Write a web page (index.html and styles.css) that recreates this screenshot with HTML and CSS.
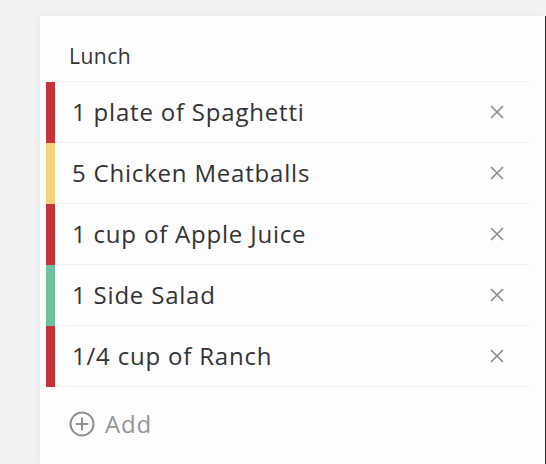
FILE: index.html
```html
<!DOCTYPE html>
<html>
<head>
	<title>Lunch</title>
	<link rel="stylesheet" href="styles.css">
</head>
<body>
  <div class="page">
    <div class="meal-card">
      <div class="meal-title">Lunch</div>

      <ul class="food-list">
        <li class="food red"><div class="food-body"><span class="food-name">1 plate of Spaghetti</span><button class="remove"><svg width="14" height="14" viewBox="0 0 14 14"><path d="M1 1l12 12M13 1L1 13"/></svg></button></div></li>
        <li class="food yellow"><div class="food-body"><span class="food-name">5 Chicken Meatballs</span><button class="remove"><svg width="14" height="14" viewBox="0 0 14 14"><path d="M1 1l12 12M13 1L1 13"/></svg></button></div></li>
        <li class="food red"><div class="food-body"><span class="food-name">1 cup of Apple Juice</span><button class="remove"><svg width="14" height="14" viewBox="0 0 14 14"><path d="M1 1l12 12M13 1L1 13"/></svg></button></div></li>
        <li class="food green"><div class="food-body"><span class="food-name">1 Side Salad</span><button class="remove"><svg width="14" height="14" viewBox="0 0 14 14"><path d="M1 1l12 12M13 1L1 13"/></svg></button></div></li>
        <li class="food red"><div class="food-body"><span class="food-name">1/4 cup of Ranch</span><button class="remove"><svg width="14" height="14" viewBox="0 0 14 14"><path d="M1 1l12 12M13 1L1 13"/></svg></button></div></li>
      </ul>

      <div class="add-row">
        <svg class="add-icon" width="26" height="26" viewBox="0 0 26 26">
          <circle cx="13" cy="13" r="11.5" fill="none" stroke="#8e8e8e" stroke-width="2"/>
          <path d="M13 7.5v11M7.5 13h11" stroke="#8e8e8e" stroke-width="2" stroke-linecap="round"/>
        </svg>
        <span>Add</span>
      </div>
    </div>
  </div>
</body>
</html>
```

FILE: styles.css
```css
html, body{
	margin:0;
	padding:0;
}

body{
	background:#f2f2f4;
	font-family:"Open Sans", "Noto Sans", sans-serif;
	color:#333335;
}

.page{
	padding:16px 0 0 40px;
	height:448px;
}

	.meal-card{
		background:#fdfdfe;
		height:100%;
		border-right:1px solid #2c2c2e;
		box-shadow:-2px 0 6px rgba(0,0,0,.04);
	}

		.meal-title{
			padding:28px 0 14px 29px;
			font-size:21px;
			line-height:24px;
			letter-spacing:.5px;
		}

		.food-list{
			list-style:none;
			margin:0;
			padding:0 16px 0 6px;
		}

			.food{
				height:61px;
				border-left:9px solid #c7313c;
			}

			.food.yellow{ border-left-color:#f3d27c; }
			.food.green{ border-left-color:#6dc19c; }

				.food-body{
					display:flex;
					align-items:center;
					height:60px;
					border-bottom:1px solid #efeff1;
				}

				.food:first-child .food-body{
					box-shadow:0 -1px 0 #f1f1f3;
				}

					.food-name{
						flex:1;
						padding:0 0 2px 17px;
						font-size:24px;
						letter-spacing:.8px;
					}

					.remove{
						display:flex;
						justify-content:center;
						align-items:center;
						width:64px;
						border:0;
						background:none;
						padding:0;
					}

						.remove path{
							stroke:#8d8d8f;
							stroke-width:1.7;
							fill:none;
						}

		.add-row{
			display:flex;
			align-items:center;
			gap:10px;
			padding:20px 0 0 29px;
			font-size:24px;
			letter-spacing:.8px;
			color:#959597;
		}
```
